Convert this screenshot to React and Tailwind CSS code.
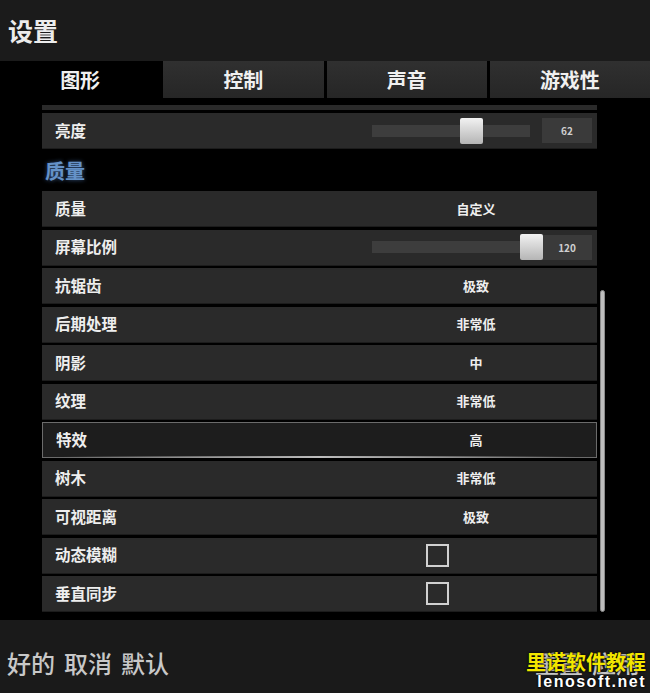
const FONT = "font-['Noto_Sans_CJK_SC','Noto_Sans',sans-serif]";

const tabs = ["图形", "控制", "声音", "游戏性"];

const rows = [
  { label: "质量", value: "自定义" },
  { label: "屏幕比例", slider: 148, num: "120" },
  { label: "抗锯齿", value: "极致" },
  { label: "后期处理", value: "非常低" },
  { label: "阴影", value: "中" },
  { label: "纹理", value: "非常低" },
  { label: "特效", value: "高", active: true },
  { label: "树木", value: "非常低" },
  { label: "可视距离", value: "极致" },
  { label: "动态模糊", check: true },
  { label: "垂直同步", check: true },
];

function Slider({ pos, num }) {
  return (
    <div className="flex items-center pl-[17px]">
      <div className="relative w-[158px] h-[12px] bg-[#3d3d3d]">
        <div
          className="absolute top-[-7px] w-[23px] h-[26px] bg-linear-to-b from-[#f2f2f2] to-[#b5b5b5] rounded-[2px]"
          style={{ left: `${pos}px` }}
        />
      </div>
      <div className="ml-[12px] w-[50px] h-[25px] bg-[#3a3a3a] flex items-center justify-center text-[10px] text-[#cfcfcf] font-bold">
        {num}
      </div>
    </div>
  );
}

function Row({ row }) {
  return (
    <div
      className={
        "relative h-[36px] flex items-center " +
        (row.active
          ? "bg-[#1d1d1d] border border-[#6b6b6b]"
          : "bg-[#2a2a2a] border-b border-[#1c1c1c]")
      }
    >
      <div className="w-[313px] pl-[13px] text-[15.5px] font-bold text-[#eeeeee]">{row.label}</div>
      <div className="flex-1">
        {row.slider !== undefined && <Slider pos={row.slider} num={row.num} />}
        {row.value && (
          <div className="text-center text-[13px] font-bold text-[#eeeeee]">{row.value}</div>
        )}
        {row.check && (
          <div className="ml-[71px] w-[23px] h-[23px] border-2 border-[#d0d0d0]" />
        )}
      </div>
      {row.active && (
        <div className="absolute left-[20px] right-[20px] bottom-[-1px] h-[2px] bg-linear-to-r from-transparent via-[#bdbdbd] to-transparent" />
      )}
    </div>
  );
}

export default function App() {
  return (
    <div className={"w-[650px] h-[693px] bg-black overflow-hidden relative " + FONT}>
      {/* header */}
      <div className="h-[61px] bg-[#1b1b1b] flex items-center pl-[8px]">
        <h1 className="text-[25px] font-bold text-[#ececec]">设置</h1>
      </div>

      {/* tabs */}
      <div className="h-[37px] flex gap-[3px] bg-black">
        {tabs.map((t, i) => (
          <div
            key={t}
            className={
              "flex-1 flex items-center justify-center text-[20px] font-bold text-[#f0f0f0] " +
              (i === 0 ? "bg-black" : "bg-linear-to-b from-[#303030] to-[#262626]")
            }
          >
            {t}
          </div>
        ))}
      </div>

      {/* content */}
      <div className="flex h-[522px]">
        <div className="ml-[42px] w-[555px] flex flex-col">
          <div className="mt-[7px] h-[5px] bg-[#2a2a2a]" />
          <div className="mt-[3px]">
            <Row row={{ label: "亮度", slider: 88, num: "62" }} />
          </div>
          <div className="h-[42px] flex items-center pl-[3px] pt-[2px]">
            <span className="text-[20px] font-bold text-[#6592c8] [text-shadow:0_0_4px_rgba(90,140,210,0.6)]">
              质量
            </span>
          </div>
          <div className="flex flex-col gap-[2.5px]">
            {rows.map((r) => (
              <Row key={r.label} row={r} />
            ))}
          </div>
        </div>
        <div className="ml-[3px] mt-[192px] w-[5px] h-[322px] rounded-full bg-[#bdbdbd] border border-[#8a8a8a]" />
      </div>

      {/* footer */}
      <div className="h-[73px] bg-[#1a1a1a] flex items-center justify-between pl-[7px] pr-[10px] pt-[12px]">
        <div className="flex gap-[9px] text-[24px] font-medium text-[#c8c8c8]">
          <span>好的</span>
          <span>取消</span>
          <span>默认</span>
        </div>
        <div className="flex gap-[9px] text-[24px] font-medium text-[#c8c8c8]">
          <span>重置</span>
          <span>应用</span>
        </div>
      </div>

      {/* watermark */}
      <div className="absolute right-[4px] bottom-[3px] flex flex-col items-end leading-none">
        <span className="text-[20px] font-bold text-[#f2e600] [text-shadow:0_0_2px_#000,0_0_2px_#000]">
          里诺软件教程
        </span>
        <span className="mt-[2px] text-[16px] font-bold tracking-[1.5px] text-white font-['Liberation_Sans',sans-serif] [text-shadow:0_0_2px_#000,0_0_2px_#000]">
          lenosoft.net
        </span>
      </div>
    </div>
  );
}
